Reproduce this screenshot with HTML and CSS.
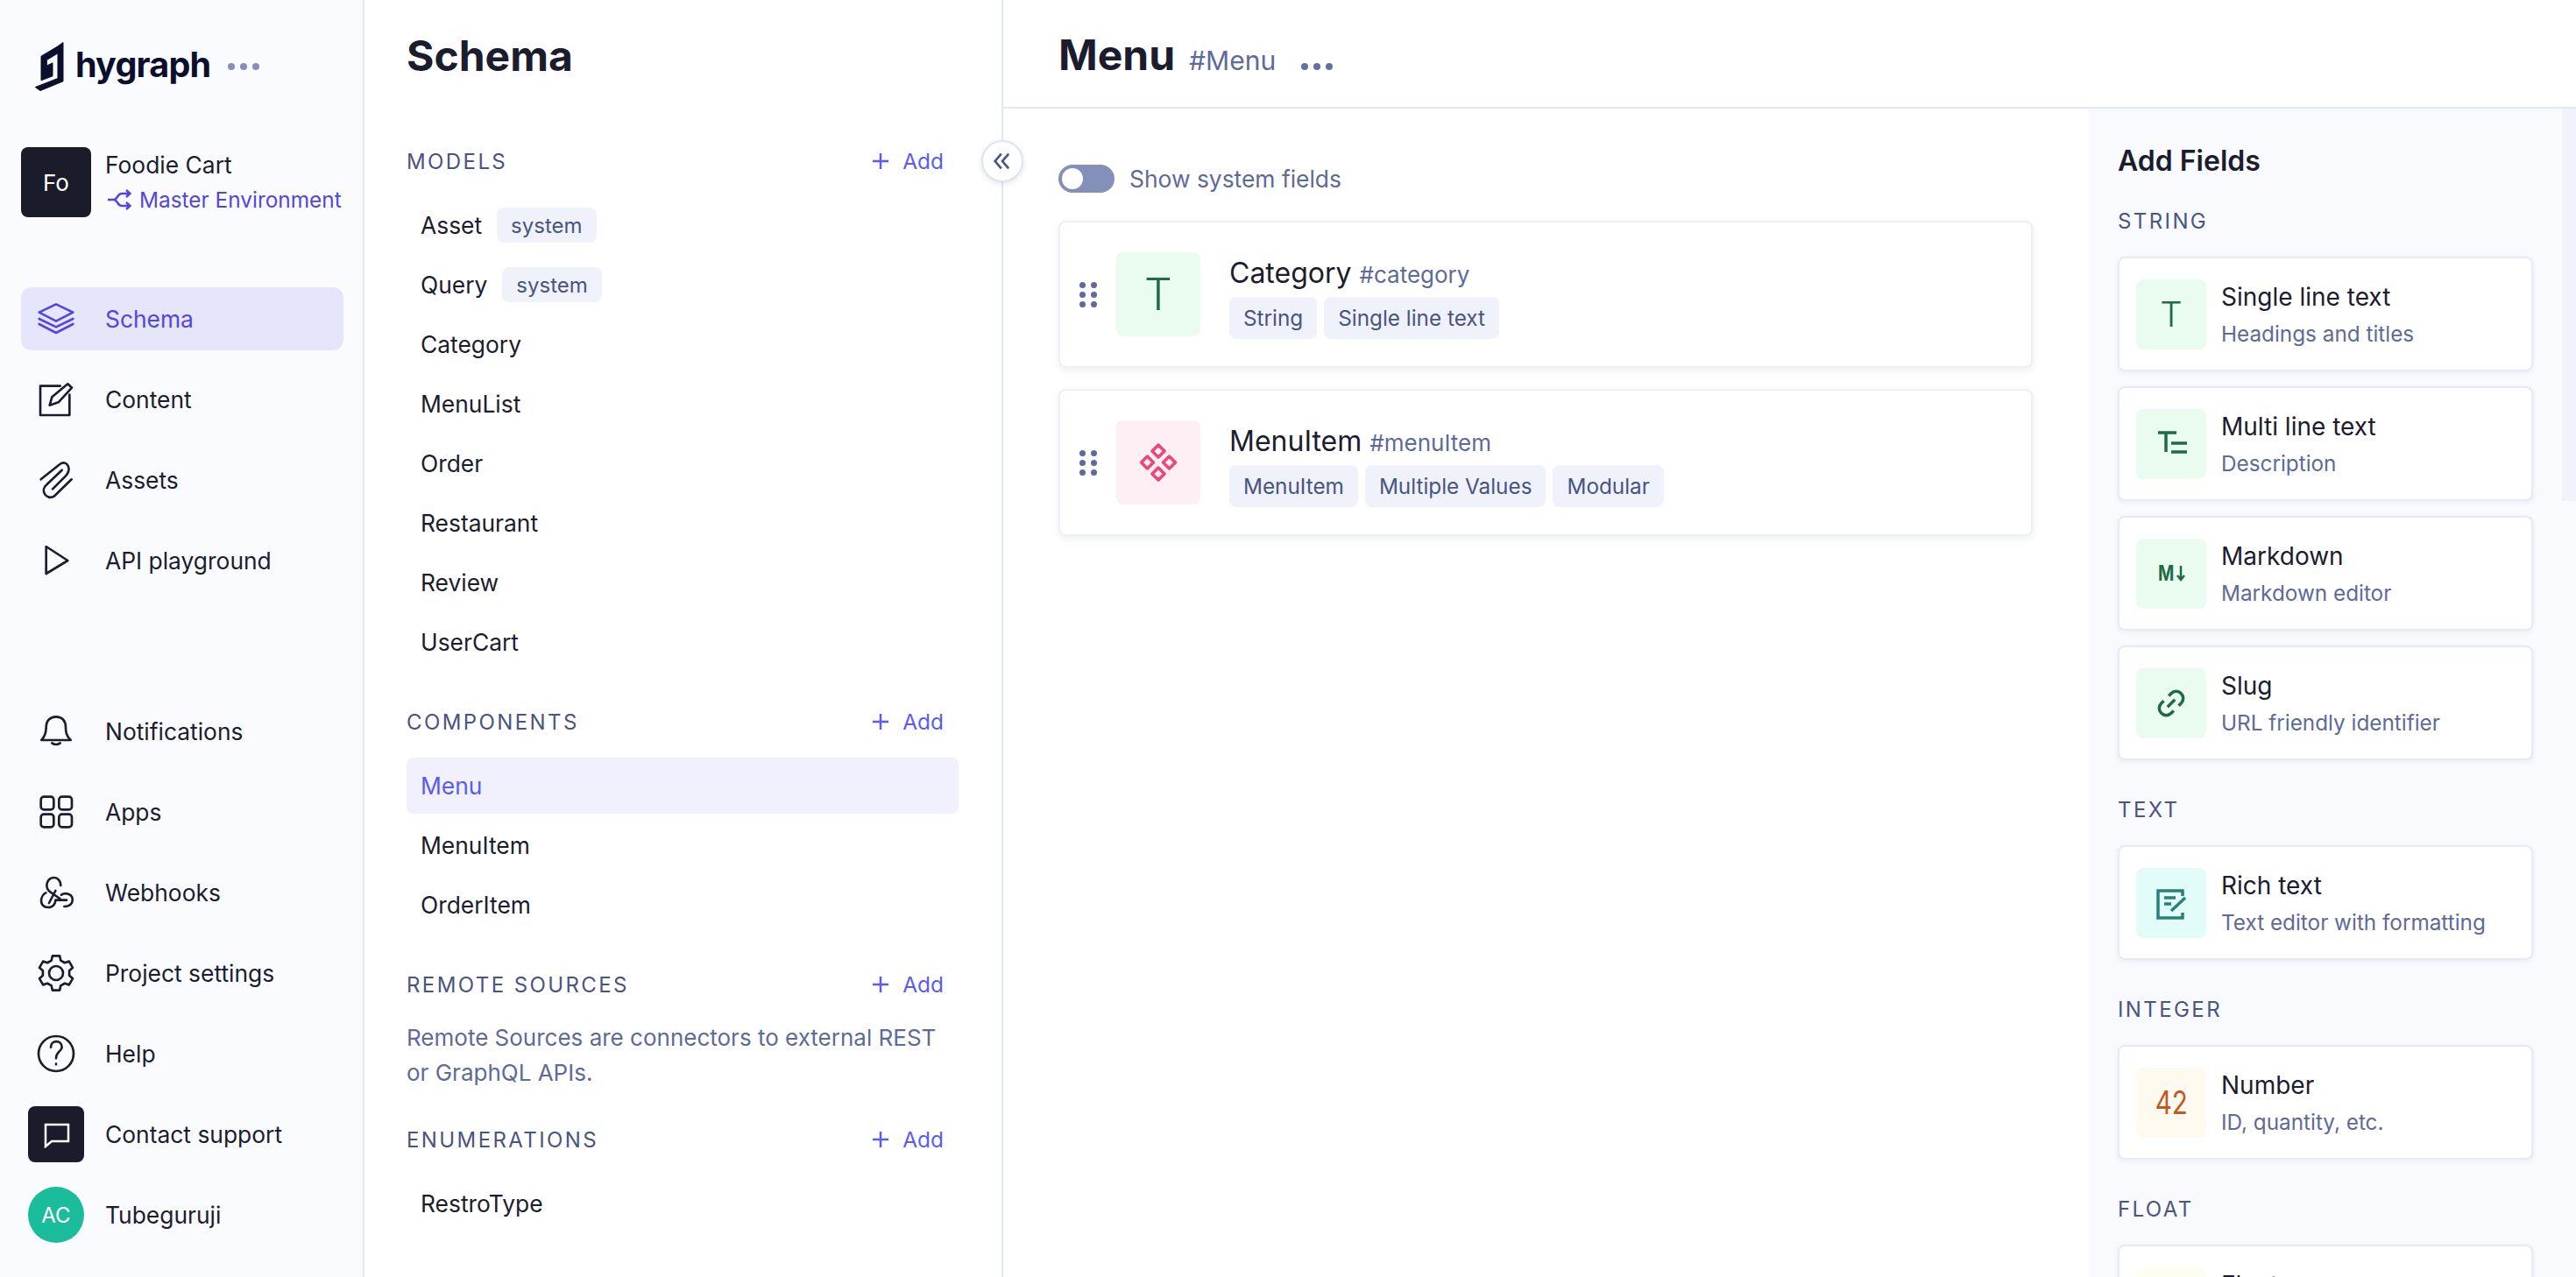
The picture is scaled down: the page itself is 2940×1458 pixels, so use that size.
FILE: index.html
```html
<!DOCTYPE html>
<html lang="en">
<head>
    <meta charset="UTF-8">
    <title>Hygraph Schema</title>
    <link rel="stylesheet" href="styles.css">
</head>
<body>
    <aside class="sidebar">
        <div class="logo-row">
            <svg class="logo-mark" viewBox="0 0 120 200"><path d="M90 38L108 25V158L30 190L13 178L90 148V62L52 85V105L72 95V140L33 155V72Z"/></svg>
            <span class="logo-text">hygraph</span>
            <svg class="dots dots-logo" viewBox="0 0 36 8"><circle cx="4" cy="4" r="4"/><circle cx="18" cy="4" r="4"/><circle cx="32" cy="4" r="4"/></svg>
        </div>
        <div class="account">
            <div class="account-box">Fo</div>
            <div>
                <div class="account-name">Foodie Cart</div>
                <div class="account-env">
                    <svg viewBox="0 0 28 24"><path d="M1 12H8C12 12 12 5 17 5H26M22 1L26.500 5L22 9M17 19H26M22 15L26.500 19L22 23M8 12C12 12 12 19 17 19"/></svg>
                    Master Environment
                </div>
            </div>
        </div>
        <nav class="nav nav-top">
            <a class="nav-item active">
                <svg class="nav-icon" viewBox="0 0 144 144"><path d="M72 22L130 50L72 80L14 50ZM14 72L72 100L130 72M14 90L72 120L130 90"/></svg>
                Schema
            </a>
            <a class="nav-item">
                <svg class="nav-icon" viewBox="0 276 144 144"><path d="M86 302H18V402H118V332M50 368L58 340L112 295L126 308L80 358Z"/></svg>
                Content
            </a>
            <a class="nav-item">
                <svg class="nav-icon" viewBox="0 552 144 144"><path d="M20 622L85 570C108 553 128 585 105 610L60 655M125 622L65 680C40 695 15 660 40 640L92 590"/></svg>
                Assets
            </a>
            <a class="nav-item">
                <svg class="nav-icon" viewBox="0 828 144 144"><path d="M38 852L112 900L38 945Z"/></svg>
                API playground
            </a>
        </nav>
        <nav class="nav nav-bottom">
            <a class="nav-item">
                <svg class="nav-icon" viewBox="0 0 144 144"><path d="M22 102H122C105 85 105 70 105 58C105 35 92 22 72 22C52 22 38 35 38 58C38 70 38 85 22 102ZM58 112Q72 122 86 112"/></svg>
                Notifications
            </a>
            <a class="nav-item">
                <svg class="nav-icon" viewBox="0 276 144 144"><rect x="20" y="296" width="44" height="44" rx="10"/><rect x="82" y="296" width="44" height="44" rx="10"/><rect x="20" y="356" width="44" height="44" rx="10"/><rect x="82" y="356" width="44" height="44" rx="10"/></svg>
                Apps
            </a>
            <a class="nav-item">
                <svg class="nav-icon" viewBox="0 552 144 144"><path d="M37 625C17 635 12 675 45 675C62 675 70 662 70 650H108M100 672C120 672 130 660 128 645C126 630 105 622 90 632M88 600C88 585 78 573 65 573C50 573 40 585 40 600C40 610 45 617 52 622L85 645M70 618L48 660"/></svg>
                Webhooks
            </a>
            <a class="nav-item">
                <svg class="nav-icon" viewBox="-72 -72 144 144"><path d="M15.700 -43.200L12.500 -58.700H-12.500L-15.700 -43.200L-29.600 -35.200L-44.600 -40.100L-57.100 -18.500L-45.300 -8V8L-57.100 18.500L-44.600 40.100L-29.600 35.200L-15.700 43.200L-12.500 58.700H12.500L15.700 43.200L29.600 35.200L44.600 40.100L57.100 18.500L45.300 8V-8L57.100 -18.500L44.600 -40.100L29.600 -35.200Z"/><circle r="24"/></svg>
                Project settings
            </a>
            <a class="nav-item">
                <svg class="nav-icon" viewBox="-72 -72 144 144"><circle r="60"/><path d="M-18 -22C-18 -48 20 -48 20 -22C20 -8 0 -8 0 16M0 35V37"/></svg>
                Help
            </a>
            <a class="nav-item nav-item-box">
                <span class="support-box">
                    <svg viewBox="0 0 32 32"><path d="M4 5H30V24H11L4 30Z"/></svg>
                </span>
                Contact support
            </a>
            <a class="nav-item nav-item-box">
                <span class="user-avatar">AC</span>
                Tubeguruji
            </a>
        </nav>
    </aside>

    <section class="schema-panel">
        <h2 class="panel-title">Schema</h2>
        <button class="collapse-btn">
            <svg viewBox="0 0 20 20"><path d="M9 3L3 10L9 17M16 3L10 10L16 17"/></svg>
        </button>

        <div class="section-head section-first">
            <span>MODELS</span>
            <a class="add-link"><svg viewBox="0 0 18 18"><path d="M9 0V18M0 9H18"/></svg>Add</a>
        </div>
        <ul class="item-list">
            <li class="item">Asset <span class="badge">system</span></li>
            <li class="item">Query <span class="badge">system</span></li>
            <li class="item">Category</li>
            <li class="item">MenuList</li>
            <li class="item">Order</li>
            <li class="item">Restaurant</li>
            <li class="item">Review</li>
            <li class="item">UserCart</li>
        </ul>

        <div class="section-head">
            <span>COMPONENTS</span>
            <a class="add-link"><svg viewBox="0 0 18 18"><path d="M9 0V18M0 9H18"/></svg>Add</a>
        </div>
        <ul class="item-list">
            <li class="item item-active">Menu</li>
            <li class="item">MenuItem</li>
            <li class="item">OrderItem</li>
        </ul>

        <div class="section-head">
            <span>REMOTE SOURCES</span>
            <a class="add-link"><svg viewBox="0 0 18 18"><path d="M9 0V18M0 9H18"/></svg>Add</a>
        </div>
        <p class="section-note">Remote Sources are connectors to external REST or GraphQL APIs.</p>

        <div class="section-head section-enum">
            <span>ENUMERATIONS</span>
            <a class="add-link"><svg viewBox="0 0 18 18"><path d="M9 0V18M0 9H18"/></svg>Add</a>
        </div>
        <ul class="item-list">
            <li class="item">RestroType</li>
        </ul>
    </section>

    <main class="main">
        <header class="main-header">
            <h1>Menu</h1>
            <span class="api-id">#Menu</span>
            <svg class="dots dots-main" viewBox="0 0 36 8"><circle cx="4" cy="4" r="4"/><circle cx="18" cy="4" r="4"/><circle cx="32" cy="4" r="4"/></svg>
        </header>
        <div class="main-body">
            <div class="content">
                <div class="toggle-row">
                    <span class="toggle"><span class="toggle-knob"></span></span>
                    Show system fields
                </div>
                <div class="field-card">
                    <div class="handle"><i></i><i></i><i></i><i></i><i></i><i></i></div>
                    <div class="field-icon green big-t">T</div>
                    <div class="field-text">
                        <div class="field-title">Category <span>#category</span></div>
                        <div class="tags"><span class="tag">String</span><span class="tag">Single line text</span></div>
                    </div>
                </div>
                <div class="field-card">
                    <div class="handle"><i></i><i></i><i></i><i></i><i></i><i></i></div>
                    <div class="field-icon pink">
                        <svg viewBox="0 0 96 96"><path d="M48 28L55 35L48 42L41 35ZM35.500 41L42.500 48L35.500 55L28.500 48ZM60.500 41L67.500 48L60.500 55L53.500 48ZM48 54L55 61L48 68L41 61Z"/></svg>
                    </div>
                    <div class="field-text">
                        <div class="field-title">MenuItem <span>#menuItem</span></div>
                        <div class="tags"><span class="tag">MenuItem</span><span class="tag">Multiple Values</span><span class="tag">Modular</span></div>
                    </div>
                </div>
            </div>
            <aside class="fields">
                <div class="fields-list">
                    <h3>Add Fields</h3>

                    <div class="fields-label">STRING</div>
                    <div class="add-card">
                        <div class="add-icon green t-text">T</div>
                        <div class="add-text"><b>Single line text</b><small>Headings and titles</small></div>
                    </div>
                    <div class="add-card">
                        <div class="add-icon green">
                            <svg viewBox="0 0 40 40"><path d="M5 7H26M14 7V29M20 19H38M20 29H38"/></svg>
                        </div>
                        <div class="add-text"><b>Multi line text</b><small>Description</small></div>
                    </div>
                    <div class="add-card">
                        <div class="add-icon green md-icon">
                            <span>M</span>
                            <svg viewBox="0 0 10 18"><path d="M5 0V16M1 11L5 16L9 11"/></svg>
                        </div>
                        <div class="add-text"><b>Markdown</b><small>Markdown editor</small></div>
                    </div>
                    <div class="add-card">
                        <div class="add-icon green">
                            <svg viewBox="0 0 40 40"><g transform="rotate(-45 20 20)"><path d="M16 12H12A8 8 0 0 0 12 28H16M24 12H28A8 8 0 0 1 28 28H24M14 20H26"/></g></svg>
                        </div>
                        <div class="add-text"><b>Slug</b><small>URL friendly identifier</small></div>
                    </div>

                    <div class="fields-label fields-label-gap">TEXT</div>
                    <div class="add-card">
                        <div class="add-icon teal">
                            <svg viewBox="0 0 40 40"><path d="M33 12V6H5V37H33V31M12 14H25M12 21H20M20 29L36 14"/></svg>
                        </div>
                        <div class="add-text"><b>Rich text</b><small>Text editor with formatting</small></div>
                    </div>

                    <div class="fields-label fields-label-gap">INTEGER</div>
                    <div class="add-card">
                        <div class="add-icon orange"><span class="num-text">42</span></div>
                        <div class="add-text"><b>Number</b><small>ID, quantity, etc.</small></div>
                    </div>

                    <div class="fields-label fields-label-gap">FLOAT</div>
                    <div class="add-card">
                        <div class="add-icon yellow"></div>
                        <div class="add-text"><b>Float</b></div>
                    </div>
                </div>
                <div class="scroll-thumb"></div>
            </aside>
        </div>
    </main>
</body>
</html>
```

FILE: styles.css
```css
* {
    box-sizing: border-box;
}
html, body {
    height: 1458px;
    margin: 0;
    overflow: hidden;
}
body {
    display: flex;
    font-family: Inter, "Noto Sans", sans-serif;
    font-size: 26.400px;
    color: #1b1d2e;
    background: #fff;
}

/* left nav */
.sidebar {
    width: 416px;
    flex: none;
    height: 1458px;
    padding: 40px 22px 35px 24px;
    display: flex;
    flex-direction: column;
    background: #fafbff;
    border-right: 2px solid #e4e8f5;
}
.logo-row {
    display: flex;
    align-items: center;
    height: 67px;
    padding-left: 12px;
}
.logo-mark {
    width: 40px;
    height: 67px;
    flex: none;
    fill: #0a0f2c;
    stroke: #0a0f2c;
    stroke-width: 3;
}
.logo-text {
    margin-left: 10px;
    font-size: 39.500px;
    font-weight: 700;
    letter-spacing: -0.8px;
    color: #0a0f2c;
}
.dots {
    width: 36px;
    height: 8px;
    flex: none;
}
.dots-logo {
    margin-left: 20px;
    margin-top: 5px;
    fill: #8490ba;
}
.account {
    display: flex;
    align-items: center;
    gap: 16px;
    margin-top: 61px;
}
.account-box {
    width: 80px;
    height: 80px;
    flex: none;
    border-radius: 8px;
    background: #1a1b2b;
    color: #fff;
    font-size: 26px;
    display: flex;
    align-items: center;
    justify-content: center;
}
.account-name {
    line-height: 40px;
}
.account-env {
    display: flex;
    align-items: center;
    gap: 9px;
    line-height: 40px;
    font-size: 24.400px;
    color: #5346e0;
    white-space: nowrap;
}
.account-env svg {
    width: 28px;
    height: 24px;
    margin-left: 2px;
    flex: none;
    fill: none;
    stroke: #5346e0;
    stroke-width: 2.500;
}
.nav {
    display: flex;
    flex-direction: column;
    gap: 20px;
}
.nav-top {
    margin-top: 80px;
}
.nav-bottom {
    margin-top: auto;
}
.nav-item {
    height: 72px;
    display: flex;
    align-items: center;
    gap: 32px;
    padding-left: 16px;
    border-radius: 12px;
}
.nav-item.active {
    background: #e5e5fb;
    color: #5346e0;
}
.nav-icon {
    width: 48px;
    height: 48px;
    flex: none;
    fill: none;
    stroke: #1b1d2e;
    stroke-width: 8;
    stroke-linecap: round;
    stroke-linejoin: round;
}
.active .nav-icon {
    stroke: #5346e0;
}
.nav-item-box {
    padding-left: 8px;
    gap: 24px;
}
.support-box, .user-avatar {
    width: 64px;
    height: 64px;
    flex: none;
    display: flex;
    align-items: center;
    justify-content: center;
}
.support-box {
    background: #1a1b2b;
    border-radius: 8px;
}
.support-box svg {
    width: 32px;
    height: 32px;
    fill: none;
    stroke: #fff;
    stroke-width: 2.500;
}
.user-avatar {
    background: #1abc9c;
    border-radius: 50%;
    color: #fff;
    font-size: 24px;
}

/* schema list */
.schema-panel {
    position: relative;
    width: 729px;
    flex: none;
    height: 1458px;
    padding: 32px 49px 0 48px;
    border-right: 2px solid #e4e8f5;
}
.panel-title {
    margin: 0;
    font-size: 48px;
    line-height: 64px;
    font-weight: 700;
}
.collapse-btn {
    position: absolute;
    top: 160px;
    right: -25px;
    width: 48px;
    height: 48px;
    padding: 0;
    display: flex;
    align-items: center;
    justify-content: center;
    background: #fff;
    border: 2px solid #dfe3f3;
    border-radius: 50%;
    box-shadow: 0 2px 6px rgba(30, 40, 90, .12);
}
.collapse-btn svg {
    width: 24px;
    height: 24px;
    fill: none;
    stroke: #4a5480;
    stroke-width: 2.200;
}
.section-head {
    display: flex;
    align-items: center;
    justify-content: space-between;
    height: 32px;
    margin: 43px 0 25px;
    padding-right: 17px;
    font-size: 24px;
    letter-spacing: 2.400px;
    color: #4a5480;
}
.section-first {
    margin-top: 72px;
}
.section-enum {
    margin-top: 40px;
}
.add-link {
    display: flex;
    align-items: center;
    gap: 16px;
    font-size: 24.400px;
    letter-spacing: 0;
    color: #5b5bef;
}
.add-link svg {
    width: 18px;
    height: 18px;
    flex: none;
    fill: none;
    stroke: #5b5bef;
    stroke-width: 2.500;
}
.item-list {
    list-style: none;
    margin: 0;
    padding: 0;
    display: flex;
    flex-direction: column;
    gap: 4px;
}
.item {
    height: 64px;
    display: flex;
    align-items: center;
    padding-left: 16px;
    border-radius: 8px;
}
.item-active {
    background: #f1f1fd;
    color: #5b5bef;
}
.badge {
    margin-left: 17px;
    height: 40px;
    padding: 0 16px;
    display: flex;
    align-items: center;
    border-radius: 8px;
    background: #eff1fb;
    color: #4a5480;
    font-size: 24px;
}
.section-note {
    margin: 0;
    font-size: 26px;
    line-height: 40px;
    color: #5e6a97;
}

/* main area */
.main {
    flex: 1;
    min-width: 0;
    height: 1458px;
    display: flex;
    flex-direction: column;
}
.main-header {
    height: 124px;
    flex: none;
    padding-left: 63px;
    display: flex;
    align-items: baseline;
    border-bottom: 2px solid #e4e8f5;
}
.main-header h1 {
    margin: 0;
    font-size: 48px;
    line-height: 126px;
    font-weight: 700;
}
.api-id {
    margin-left: 16px;
    font-size: 30px;
    color: #5e6a97;
}
.dots-main {
    margin-left: 29px;
    fill: #6470a0;
}
.main-body {
    flex: 1;
    min-height: 0;
    display: flex;
}
.content {
    flex: 1;
    min-width: 0;
    padding: 64px 64px 0 63px;
}
.toggle-row {
    display: flex;
    align-items: center;
    gap: 17px;
    height: 32px;
    margin-bottom: 32px;
    color: #5e6a97;
}
.toggle {
    width: 64px;
    height: 32px;
    padding: 4px;
    border-radius: 16px;
    background: #8490b8;
}
.toggle-knob {
    display: block;
    width: 24px;
    height: 24px;
    border-radius: 50%;
    background: #fff;
}
.field-card {
    height: 168px;
    margin-bottom: 24px;
    padding-left: 22px;
    display: flex;
    align-items: center;
    background: #fff;
    border: 2px solid #eef0f8;
    border-radius: 8px;
    box-shadow: 0 3px 8px rgba(30, 40, 90, .08);
}
.handle {
    width: 20px;
    display: grid;
    grid-template-columns: 7px 7px;
    justify-content: space-between;
    row-gap: 4px;
}
.handle i {
    width: 7px;
    height: 7px;
    border-radius: 50%;
    background: #5e6a97;
}
.field-icon {
    width: 96px;
    height: 96px;
    margin-left: 22px;
    flex: none;
    display: flex;
    align-items: center;
    justify-content: center;
    border-radius: 8px;
}
.field-icon svg {
    width: 96px;
    height: 96px;
    fill: none;
    stroke: #f0437a;
    stroke-width: 3.500;
    stroke-linejoin: round;
}
.green {
    background: #eafbf0;
    color: #1f6b46;
}
.pink {
    background: #fdeff4;
}
.teal {
    background: #e2fdf9;
    color: #2a7f77;
}
.orange {
    background: #fefaf0;
    color: #c4561f;
}
.yellow {
    background: #fefef0;
}
.big-t {
    font-size: 50px;
    font-weight: 300;
}
.field-text {
    margin: 2px 0 0 33px;
}
.field-title {
    font-size: 32px;
    line-height: 50px;
}
.field-title span {
    font-size: 26px;
    color: #5e6a97;
}
.tags {
    display: flex;
    gap: 8px;
}
.tag {
    height: 48px;
    padding: 0 16px;
    display: flex;
    align-items: center;
    border-radius: 8px;
    background: #eff1fb;
    color: #4a5480;
    font-size: 24.300px;
}

/* add fields */
.fields {
    width: 556px;
    flex: none;
    display: flex;
    align-items: flex-start;
    background: #f9fafe;
}
.fields-list {
    width: 540px;
    flex: none;
    padding: 40px 33px 0;
}
.fields-list h3 {
    margin: 0;
    font-size: 32px;
    line-height: 40px;
    font-weight: 600;
}
.fields-label {
    height: 32px;
    margin: 33px 0 24px;
    font-size: 24px;
    line-height: 32px;
    letter-spacing: 2.400px;
    color: #4a5480;
}
.fields-label-gap {
    margin-top: 41px;
}
.add-card {
    height: 131px;
    margin-bottom: 17px;
    padding-left: 19px;
    display: flex;
    align-items: center;
    gap: 17px;
    background: #fff;
    border: 2px solid #e6e9f6;
    border-radius: 8px;
    box-shadow: 0 2px 6px rgba(30, 40, 90, .06);
}
.add-icon {
    width: 80px;
    height: 80px;
    flex: none;
    display: flex;
    align-items: center;
    justify-content: center;
    border-radius: 8px;
}
.add-icon svg {
    width: 40px;
    height: 40px;
    fill: none;
    stroke: currentColor;
    stroke-width: 3.500;
}
.t-text {
    font-size: 40px;
    font-weight: 300;
}
.md-icon {
    gap: 2px;
    font-size: 24px;
    font-weight: 700;
}
.md-icon span {
    display: block;
    width: 19px;
    transform: scaleX(.82);
    transform-origin: left center;
}
.md-icon svg {
    width: 10px;
    height: 18px;
    stroke-width: 2.500;
}
.num-text {
    font-size: 37px;
    transform: scaleX(.8);
}
.add-text {
    height: 80px;
    display: flex;
    flex-direction: column;
    justify-content: space-between;
}
.add-text b {
    font-size: 28px;
    font-weight: 400;
    line-height: 40px;
}
.add-text small {
    font-size: 24.300px;
    line-height: 36px;
    color: #5e6a97;
}
.scroll-thumb {
    width: 16px;
    height: 448px;
    background: #f1f3fa;
}
```
